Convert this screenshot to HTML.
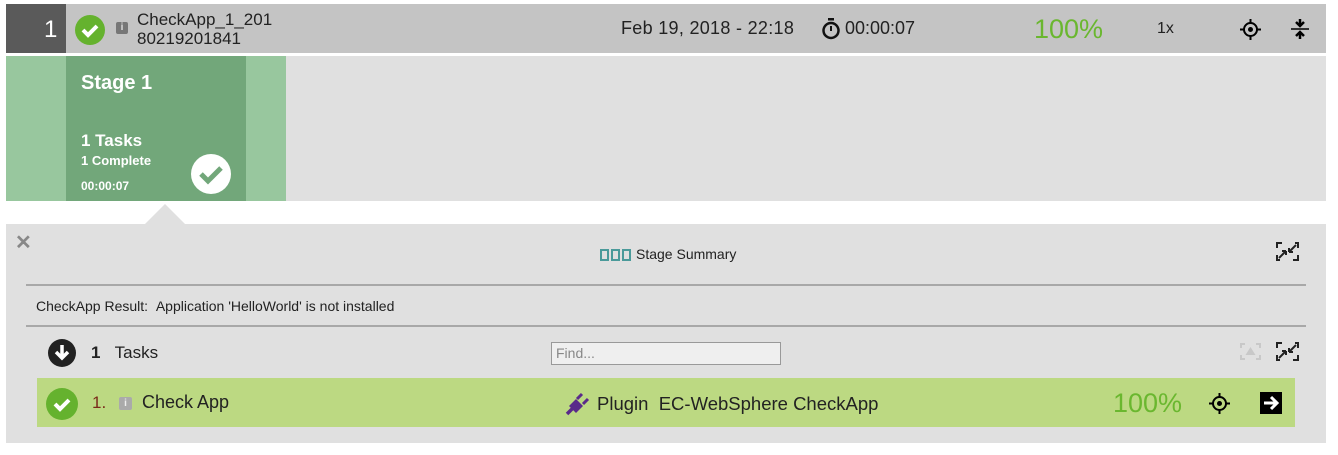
<!DOCTYPE html>
<html><head><style>
body{margin:0;width:1338px;height:455px;background:#fff;font-family:"Liberation Sans",sans-serif;position:relative;overflow:hidden}
.a{position:absolute}
</style></head><body>
<div class="a" style="left:6px;top:4px;width:1320px;height:49px;background:#c4c4c4"></div>
<div class="a" style="left:6px;top:4px;width:60px;height:49px;background:#5a5a5a"></div>
<div class="a" style="left:44px;top:16px;color:#fff;font-size:24px">1</div>
<svg class="a" style="left:75px;top:15px" width="30" height="30"><circle cx="15" cy="15" r="15" fill="#65b22e"/><path d="M8 15l5 5 9-9" stroke="#fff" stroke-width="4" fill="none"/></svg>
<div class="a" style="left:116px;top:22px;width:12px;height:12px;background:#777;border-radius:2px;color:#ddd;font-size:10px;font-weight:bold;text-align:center;line-height:12px">i</div>
<div class="a" style="left:137px;top:10px;font-size:17px;line-height:19px;color:#222">CheckApp_1_201<br>80219201841</div>
<div class="a" style="left:621px;top:18px;font-size:18px;letter-spacing:0.3px;color:#222">Feb 19, 2018 - 22:18</div>
<svg class="a" style="left:821px;top:18px" width="20" height="22"><rect x="7" y="0" width="6" height="2.5" fill="#111"/><circle cx="10" cy="12.5" r="7.5" stroke="#111" stroke-width="2.5" fill="none"/><path d="M10 8v5" stroke="#111" stroke-width="2"/></svg>
<div class="a" style="left:845px;top:18px;font-size:18px;color:#222">00:00:07</div>
<div class="a" style="left:1034px;top:14px;font-size:27px;color:#6ab72f">100%</div>
<div class="a" style="left:1157px;top:20px;font-size:16px;color:#222">1x</div>
<svg class="a" style="left:1240px;top:19px" width="21" height="21"><circle cx="10.5" cy="10.5" r="6.5" stroke="#000" stroke-width="2" fill="none"/><circle cx="10.5" cy="10.5" r="2.5"/><path d="M10.5 0v5M10.5 16v5M0 10.5h5M16 10.5h5" stroke="#000" stroke-width="2"/></svg>
<svg class="a" style="left:1290px;top:17px" width="20" height="24"><path d="M10 2v6M6 5l4 4 4-4M10 22v-6M6 19l4-4 4 4" stroke="#000" stroke-width="2.5" fill="none"/><path d="M1 12h18" stroke="#000" stroke-width="1.5"/></svg>
<div class="a" style="left:6px;top:56px;width:1320px;height:145px;background:#e0e0e0"></div>
<div class="a" style="left:6px;top:56px;width:280px;height:145px;background:#98c79e"></div>
<div class="a" style="left:66px;top:56px;width:180px;height:145px;background:#72a77a"></div>
<div class="a" style="left:81px;top:72px;color:#fff;font-size:20px;font-weight:bold">Stage 1</div>
<div class="a" style="left:81px;top:131px;color:#fff;font-size:17px;font-weight:bold">1 Tasks</div>
<div class="a" style="left:81px;top:153px;color:#fff;font-size:13px;font-weight:bold">1 Complete</div>
<div class="a" style="left:81px;top:179px;color:#fff;font-size:12px;font-weight:bold">00:00:07</div>
<svg class="a" style="left:191px;top:154px" width="40" height="40"><circle cx="20" cy="20" r="20" fill="#fff"/><path d="M10 20l7 7 13-13" stroke="#72a77a" stroke-width="5" fill="none"/></svg>
<div class="a" style="left:6px;top:224px;width:1320px;height:219px;background:#e0e0e0"></div>
<div class="a" style="left:145px;top:204px;width:0;height:0;border-left:20px solid transparent;border-right:20px solid transparent;border-bottom:20px solid #e0e0e0"></div>
<div class="a" style="left:15px;top:230px;font-size:20px;color:#888;font-weight:bold">✕</div>
<svg class="a" style="left:600px;top:249px" width="32" height="12"><g fill="none" stroke="#4a9a9a" stroke-width="2"><rect x="1" y="1" width="7" height="10"/><rect x="12" y="1" width="7" height="10"/><rect x="23" y="1" width="7" height="10"/></g></svg>
<div class="a" style="left:636px;top:246px;font-size:14px;color:#222">Stage Summary</div>
<svg class="a" style="left:1276px;top:242px" width="23" height="19"><g stroke="#222" stroke-width="2" fill="none"><path d="M1 6V1h5M22 13v5h-5M1 13v5h3M22 6V1h-3"/><path d="M3 16l7-7M10 9H6M10 9v4M20 3l-7 7M13 10h4M13 10V6"/></g></svg>
<div class="a" style="left:26px;top:284px;width:1280px;height:2px;background:#a8a8a8"></div>
<div class="a" style="left:36px;top:298px;font-size:14px;color:#222">CheckApp Result:&nbsp;&nbsp;Application 'HelloWorld' is not installed</div>
<div class="a" style="left:26px;top:325px;width:1280px;height:2px;background:#a8a8a8"></div>
<svg class="a" style="left:48px;top:339px" width="28" height="28"><circle cx="14" cy="14" r="14" fill="#222"/><path d="M14 6v12M8 13l6 6 6-6" stroke="#fff" stroke-width="3.5" fill="none"/></svg>
<div class="a" style="left:91px;top:343px;font-size:17px;color:#222"><b>1</b>&nbsp;&nbsp;&nbsp;Tasks</div>
<div class="a" style="left:551px;top:342px;width:230px;height:23px;border:1px solid #999;background:#efefef;font-size:14px;color:#888;line-height:21px;padding-left:4px;box-sizing:border-box">Find...</div>
<svg class="a" style="left:1240px;top:343px" width="21" height="17"><g stroke="#c8c8c8" stroke-width="2" fill="none"><path d="M1 5V1h4M20 5V1h-4M1 12v4h4M20 12v4h-4"/></g><path d="M10.5 4l5 8h-10z" fill="#c8c8c8"/></svg>
<svg class="a" style="left:1276px;top:342px" width="23" height="19"><g stroke="#222" stroke-width="2" fill="none"><path d="M1 6V1h5M22 13v5h-5M1 13v5h3M22 6V1h-3"/><path d="M3 16l7-7M10 9H6M10 9v4M20 3l-7 7M13 10h4M13 10V6"/></g></svg>
<div class="a" style="left:37px;top:378px;width:1258px;height:49px;background:#bcd982"></div>
<svg class="a" style="left:46px;top:388px" width="32" height="32"><circle cx="16" cy="16" r="16" fill="#65b22e"/><path d="M9 16l5 5 9-9" stroke="#fff" stroke-width="4" fill="none"/></svg>
<div class="a" style="left:92px;top:393px;font-size:17px;color:#7a2a1a">1.</div>
<div class="a" style="left:119px;top:397px;width:13px;height:13px;background:#aaa;border-radius:2px;color:#eee;font-size:10px;font-weight:bold;text-align:center;line-height:13px">i</div>
<div class="a" style="left:142px;top:392px;font-size:18px;color:#222">Check App</div>
<svg class="a" style="left:564px;top:390px" width="26" height="26"><path d="M3 24l6-6" stroke="#5a2a8a" stroke-width="3.5"/><path d="M5 16l7-7 7 7-7 7z" fill="#5a2a8a"/><path d="M13 9l5-5M19 14l5-5" stroke="#5a2a8a" stroke-width="3"/></svg>
<div class="a" style="left:597px;top:393px;font-size:18.5px;color:#222">Plugin&nbsp;&nbsp;EC-WebSphere CheckApp</div>
<div class="a" style="left:1113px;top:388px;font-size:27px;color:#6ab72f">100%</div>
<svg class="a" style="left:1209px;top:393px" width="21" height="21"><circle cx="10.5" cy="10.5" r="6.5" stroke="#000" stroke-width="2" fill="none"/><circle cx="10.5" cy="10.5" r="2.5"/><path d="M10.5 0v5M10.5 16v5M0 10.5h5M16 10.5h5" stroke="#000" stroke-width="2"/></svg>
<svg class="a" style="left:1260px;top:392px" width="22" height="22"><rect width="22" height="22" fill="#000"/><path d="M4 11h13M11 5l6 6-6 6" stroke="#fff" stroke-width="3" fill="none"/></svg>
</body></html>
